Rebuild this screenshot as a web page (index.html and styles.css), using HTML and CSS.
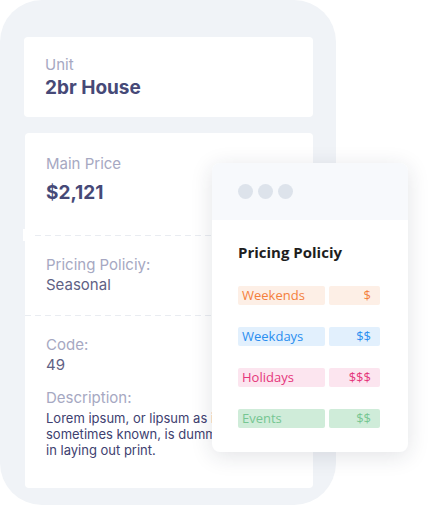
FILE: index.html
```html
<!DOCTYPE html>
<html lang="en">
<head>
    <meta charset="UTF-8">
    <meta name="viewport" content="width=device-width, initial-scale=1.0">
    <title>Unit Pricing</title>
    <link rel="stylesheet" href="styles.css">
</head>
<body>
    <div class="scene">
        <div class="phone">
            <div class="card">
                <div class="section">
                    <div class="label">Unit</div>
                    <div class="value-big">2br House</div>
                </div>
            </div>

            <div class="card card-main">
                <div class="section section-price">
                    <div class="label">Main Price</div>
                    <div class="value-big">$2,121</div>
                </div>
                <div class="divider"><span class="notch"></span></div>
                <div class="section section-policy">
                    <div class="label">Pricing Policiy:</div>
                    <div class="value">Seasonal</div>
                </div>
                <div class="divider"></div>
                <div class="section section-info">
                    <div class="label">Code:</div>
                    <div class="value">49</div>
                    <div class="label label-gap">Description:</div>
                    <p class="desc">Lorem ipsum, or lipsum as it is sometimes known, is dummy text used in laying out print.</p>
                </div>
            </div>
        </div>

        <!-- floating policy window -->
        <div class="popup">
            <div class="popup-head">
                <span class="dot"></span>
                <span class="dot"></span>
                <span class="dot"></span>
            </div>
            <div class="popup-body">
                <h3>Pricing Policiy</h3>
                <div class="rule weekends">
                    <span class="tag">Weekends</span>
                    <span class="price">$</span>
                </div>
                <div class="rule weekdays">
                    <span class="tag">Weekdays</span>
                    <span class="price">$$</span>
                </div>
                <div class="rule holidays">
                    <span class="tag">Holidays</span>
                    <span class="price">$$$</span>
                </div>
                <div class="rule events">
                    <span class="tag">Events</span>
                    <span class="price">$$</span>
                </div>
            </div>
        </div>
    </div>
</body>
</html>
```

FILE: styles.css
```css
/* Basic styling */
body {
    margin: 0;
    background-color: #fff;
    font-family: Inter, "Open Sans", sans-serif;
}
.scene {
    position: relative;
    width: 438px;
    height: 506px;
}

/* Phone frame */
.phone {
    width: 336px;
    height: 505px;
    box-sizing: border-box;
    padding: 37px 23px 17px 24px;
    background-color: #f0f3f7;
    border-radius: 42px;
    display: flex;
    flex-direction: column;
    gap: 16px;
}
.card {
    background-color: #fff;
    border-radius: 4px;
}
.card-main {
    flex: 1;
    margin-left: 1px;
    display: flex;
    flex-direction: column;
}
.section {
    display: flex;
    flex-direction: column;
    padding: 19px 21px 0;
}
.card > .section:only-child {
    height: 80px;
    box-sizing: border-box;
}
.section-price {
    height: 102px;
    box-sizing: border-box;
    padding-top: 22px;
}
.section-policy {
    height: 79px;
    box-sizing: border-box;
    padding-top: 20px;
}
.section-info {
    padding-top: 20px;
}
.label {
    font-size: 15px;
    line-height: 18px;
    color: #a6a8c2;
}
.label-gap {
    margin-top: 14px;
}
.value {
    font-size: 15px;
    line-height: 20px;
    color: #5f6184;
    margin-top: 1px;
}
.value-big {
    font-size: 19px;
    line-height: 24px;
    font-weight: bold;
    color: #464977;
    margin-top: 2px;
}
.section-price .value-big {
    margin-top: 8px;
}
.desc {
    margin: 3px 0 0;
    font-size: 13px;
    line-height: 16px;
    color: #3e4170;
}

/* dashed separators */
.divider {
    position: relative;
    height: 1px;
    background-image: repeating-linear-gradient(90deg, #e9ecf1 0 6px, transparent 6px 10px);
}
.notch {
    position: absolute;
    left: -2px;
    top: -6px;
    width: 8px;
    height: 12px;
    background-color: #fff;
    border-radius: 0 6px 6px 0;
}

/* Popup window */
.popup {
    position: absolute;
    left: 212px;
    top: 163px;
    width: 196px;
    height: 289px;
    background-color: #fff;
    border-radius: 8px;
    box-shadow: 0 4px 22px rgba(30, 40, 60, 0.13);
    overflow: hidden;
    font-family: "Open Sans", "Noto Sans", sans-serif;
}
.popup-head {
    height: 57px;
    background-color: #f7f9fc;
    display: flex;
    align-items: center;
    gap: 5px;
    padding-left: 26px;
}
.dot {
    width: 15px;
    height: 15px;
    border-radius: 50%;
    background-color: #dde3eb;
}
.popup-body {
    padding: 22px 28px 0 26px;
    display: flex;
    flex-direction: column;
    gap: 22px;
}
.popup-body h3 {
    margin: 0 0 2px;
    font-size: 15px;
    line-height: 20px;
    color: #1e1e1e;
}
.rule {
    display: flex;
    gap: 4px;
    height: 19px;
    font-size: 13px;
    line-height: 19px;
}
.tag, .price {
    border-radius: 2px;
    padding: 0 4px;
}
.tag {
    width: 87px;
    box-sizing: border-box;
}
.price {
    width: 51px;
    box-sizing: border-box;
    text-align: right;
    padding-right: 9px;
}
.weekends span {
    background-color: #fdefe6;
    color: #f47f3c;
}
.weekdays span {
    background-color: #e2f0fd;
    color: #2a8ef0;
}
.holidays span {
    background-color: #fce5ef;
    color: #e5367b;
}
.events span {
    background-color: #cfecd9;
    color: #76c692;
}
```
